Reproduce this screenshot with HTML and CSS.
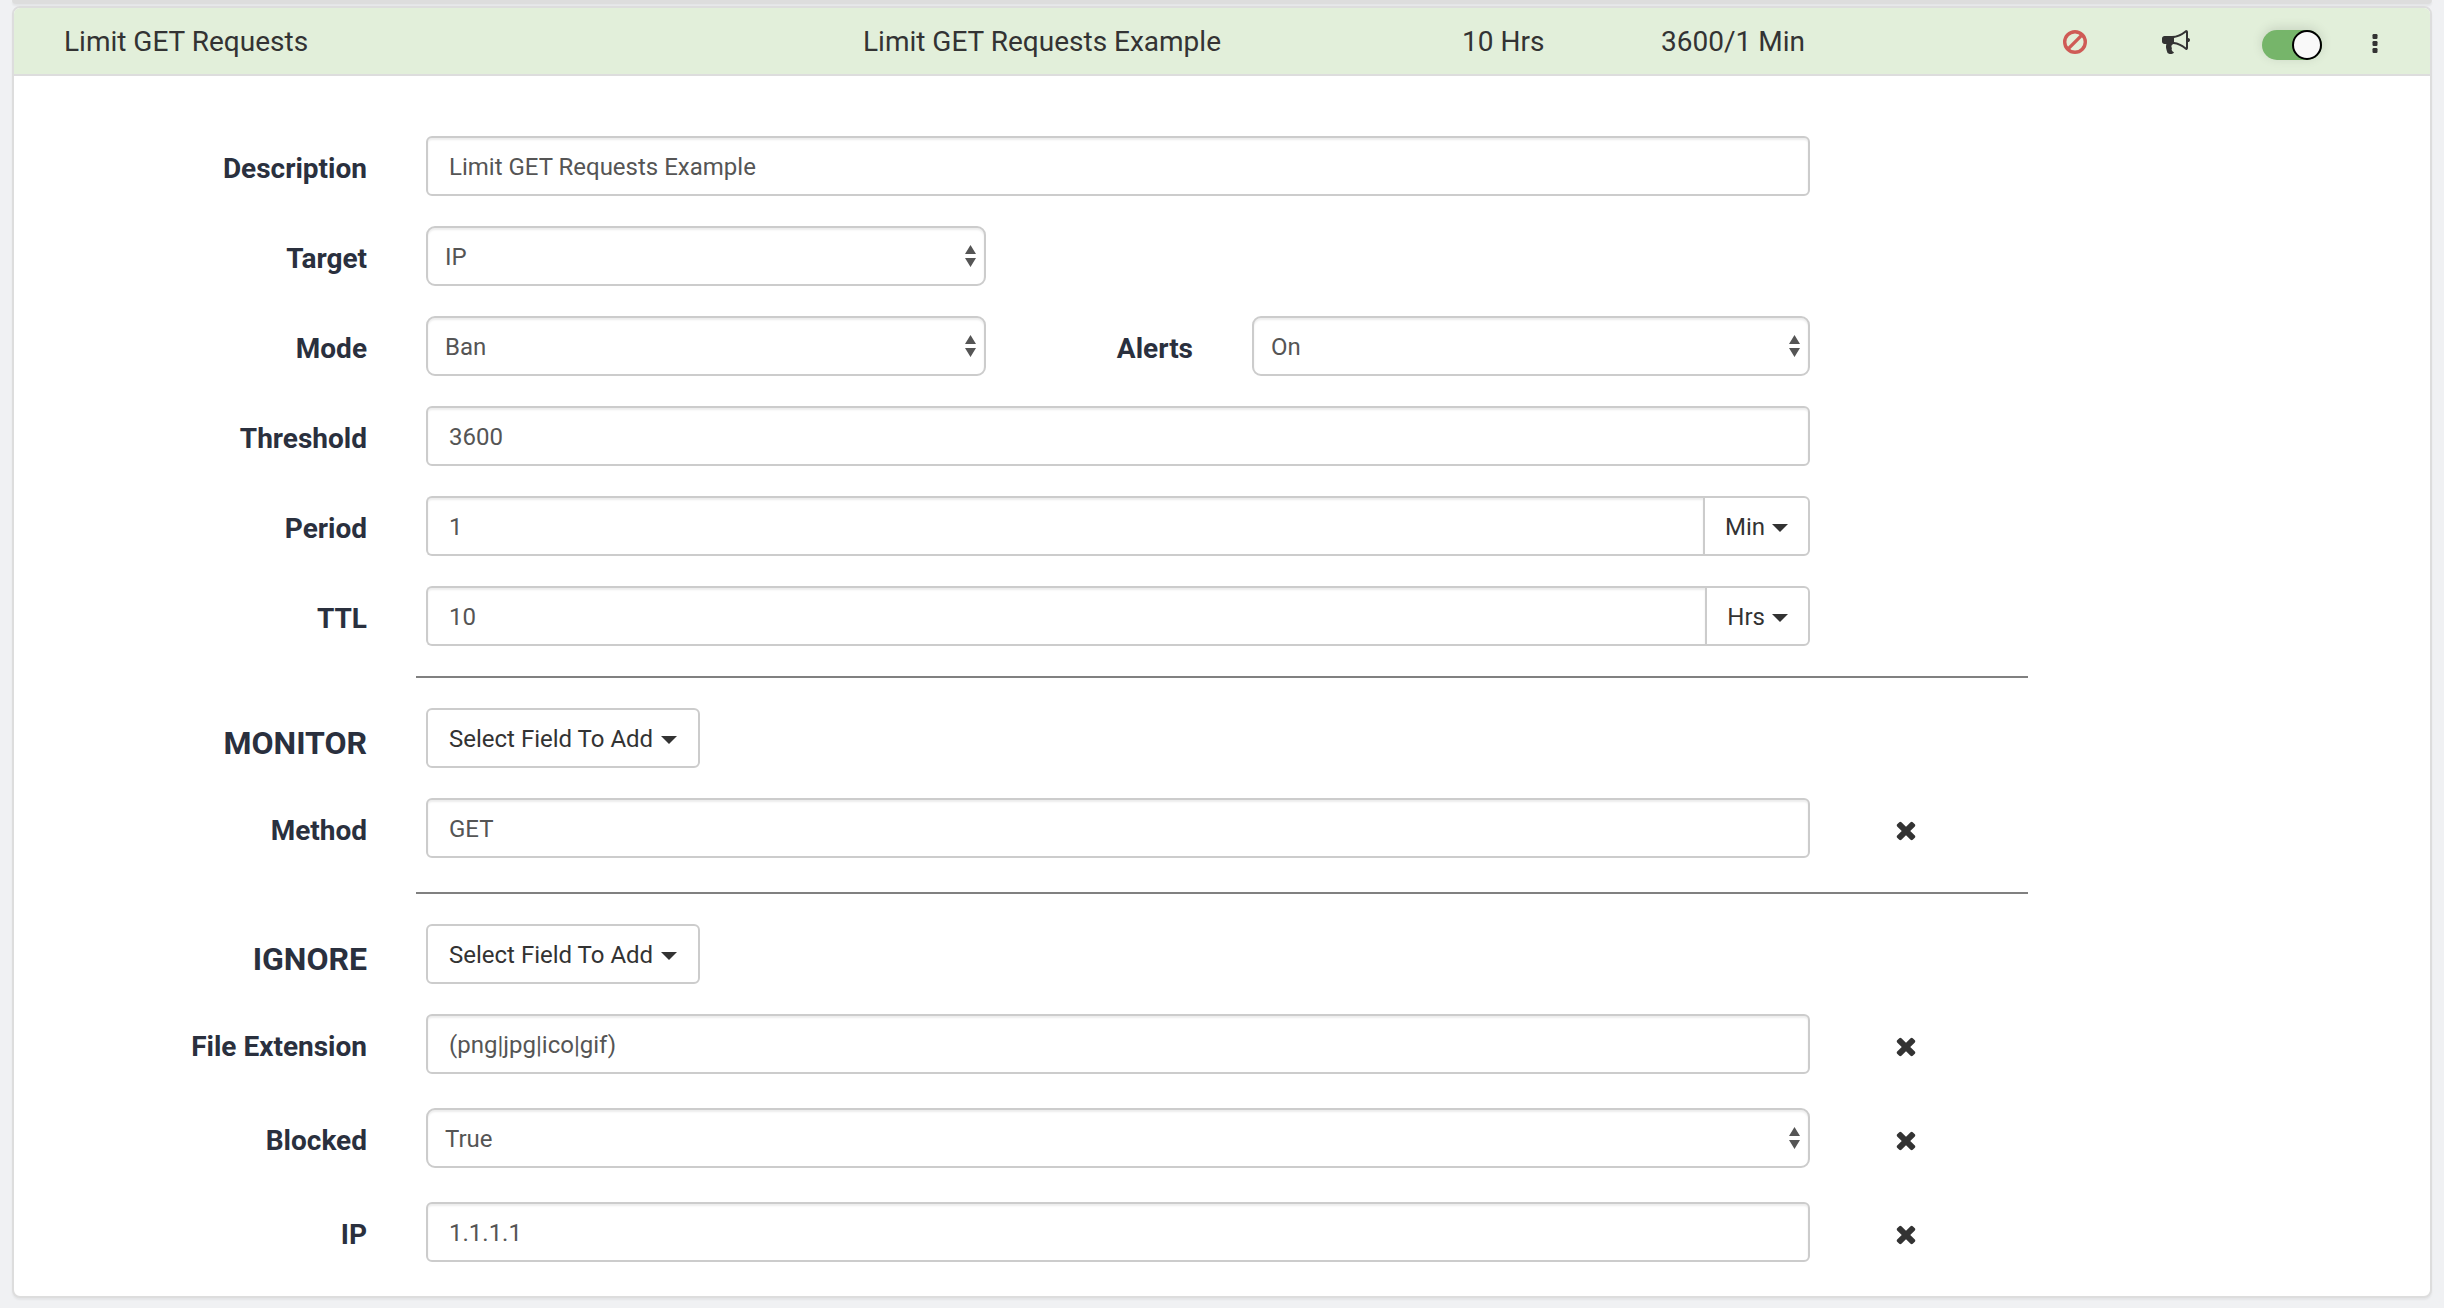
FILE: index.html
```html
<!DOCTYPE html>
<html lang="en">
<head>
<meta charset="utf-8">
<title>Limit GET Requests</title>
<link rel="stylesheet" href="styles.css">
</head>
<body>
<svg class="symbols" aria-hidden="true">
  <symbol id="times" viewBox="0 0 1792 1792"><path d="M1490 1322q0 40-28 68l-136 136q-28 28-68 28t-68-28l-294-294-294 294q-28 28-68 28t-68-28l-136-136q-28-28-28-68t28-68l294-294-294-294q-28-28-28-68t28-68l136-136q28-28 68-28t68 28l294 294 294-294q28-28 68-28t68 28l136 136q28 28 28 68t-28 68l-294 294 294 294q28 28 28 68z"/></symbol>
  <symbol id="updown" viewBox="0 0 11 22"><path d="M5.500 0L11 9H0zM0 13h11l-5.500 9z"/></symbol>
</svg>
<div class="previous-card"></div>
<main class="card">
  <header class="card-header">
    <span>Limit GET Requests</span>
    <span>Limit GET Requests Example</span>
    <span>10 Hrs</span>
    <span>3600/1 Min</span>
    <span class="cell"><svg class="ban" viewBox="0 0 24 24" role="img" aria-label="Ban"><circle cx="12" cy="12" r="10.300"/><path d="M4.900 19.100L19.100 4.900"/></svg></span>
    <span class="cell"><svg class="icon" viewBox="0 0 1792 1792" role="img" aria-label="Alerts on"><path d="M1664 640q53 0 90.500 37.500t37.500 90.500-37.500 90.500-90.500 37.500v384q0 52-38 90t-90 38q-417-347-812-380-58 19-91 66t-31 100.500 40 92.500q-20 33-23 65.500t6 58 33.500 55 48 50 61.500 50.500q-29 58-111.500 83t-168.500 11.500-132-55.500q-7-23-29.500-87.500t-32-94.500-23-89-15-101 3.500-98.500 22-110.500h-122q-66 0-113-47t-47-113v-192q0-66 47-113t113-47h480q435 0 896-384 52 0 90 38t38 90v384zm-128 604v-954q-394 302-768 343v270q377 42 768 341z"/></svg></span>
    <span class="cell"><input class="toggle" type="checkbox" role="switch" aria-label="Enabled" checked></span>
    <button class="icon-button" type="button" aria-label="More actions"><svg class="dots" viewBox="0 0 6 20"><rect x="0.500" y="0" width="5" height="5" rx="1.200"/><rect x="0.500" y="7" width="5" height="5" rx="1.200"/><rect x="0.500" y="14" width="5" height="5" rx="1.200"/></svg></button>
  </header>
  <form class="form">
    <div class="row">
      <label for="description">Description</label>
      <input class="control" id="description" type="text" value="Limit GET Requests Example">
    </div>
    <div class="row">
      <label for="target">Target</label>
      <div class="split">
        <div class="select"><select class="control" id="target"><option>IP</option></select><svg class="arrows"><use href="#updown"/></svg></div>
      </div>
    </div>
    <div class="row">
      <label for="mode">Mode</label>
      <div class="split">
        <div class="select"><select class="control" id="mode"><option>Ban</option></select><svg class="arrows"><use href="#updown"/></svg></div>
        <label for="alerts">Alerts</label>
        <div class="select"><select class="control" id="alerts"><option>On</option></select><svg class="arrows"><use href="#updown"/></svg></div>
      </div>
    </div>
    <div class="row">
      <label for="threshold">Threshold</label>
      <input class="control" id="threshold" type="text" value="3600">
    </div>
    <div class="row">
      <label for="period">Period</label>
      <div class="group">
        <input class="control" id="period" type="text" value="1">
        <button class="button" type="button">Min<span class="caret"></span></button>
      </div>
    </div>
    <div class="row">
      <label for="ttl">TTL</label>
      <div class="group">
        <input class="control" id="ttl" type="text" value="10">
        <button class="button" type="button">Hrs<span class="caret"></span></button>
      </div>
    </div>
    <hr>
    <div class="row">
      <h2>MONITOR</h2>
      <div><button class="button" type="button">Select Field To Add<span class="caret"></span></button></div>
    </div>
    <div class="row removable">
      <label for="method">Method</label>
      <input class="control" id="method" type="text" value="GET">
      <button class="icon-button" type="button" aria-label="Remove Method"><svg class="icon"><use href="#times"/></svg></button>
    </div>
    <hr>
    <div class="row">
      <h2>IGNORE</h2>
      <div><button class="button" type="button">Select Field To Add<span class="caret"></span></button></div>
    </div>
    <div class="row removable">
      <label for="extension">File Extension</label>
      <input class="control" id="extension" type="text" value="(png|jpg|ico|gif)">
      <button class="icon-button" type="button" aria-label="Remove File Extension"><svg class="icon"><use href="#times"/></svg></button>
    </div>
    <div class="row removable">
      <label for="blocked">Blocked</label>
      <div class="select"><select class="control" id="blocked"><option>True</option></select><svg class="arrows"><use href="#updown"/></svg></div>
      <button class="icon-button" type="button" aria-label="Remove Blocked"><svg class="icon"><use href="#times"/></svg></button>
    </div>
    <div class="row removable">
      <label for="ip">IP</label>
      <input class="control" id="ip" type="text" value="1.1.1.1">
      <button class="icon-button" type="button" aria-label="Remove IP"><svg class="icon"><use href="#times"/></svg></button>
    </div>
  </form>
</main>
</body>
</html>
```
FILE: styles.css
```css
* { box-sizing: border-box; }

body {
  margin: 0;
  padding: 0 12px 10px;
  background: #f0f1f3;
  color: #333;
  font: 28px/36px Roboto, "Liberation Sans", sans-serif;
}

.symbols { display: none; }

.previous-card {
  height: 4px;
  margin-bottom: 2px;
  background: #ddd;
  border-radius: 0 0 6px 6px;
  box-shadow: 0 2px 2px rgba(0, 0, 0, .05);
}

.card {
  background: #fff;
  border: 2px solid #ddd;
  border-radius: 8px;
  box-shadow: 0 2px 2px rgba(0, 0, 0, .05);
}

.card-header {
  display: grid;
  grid-template-columns: 799fr 599fr 199fr 363fr 102fr 100fr 132fr 33fr;
  align-items: center;
  height: 68px;
  padding: 2px 39px 0 50px;
  background: #e2efda;
  border-bottom: 2px solid #ddd;
  border-radius: 6px 6px 0 0;
}

.cell { display: flex; justify-content: center; }

svg { display: block; fill: currentColor; }
.icon { width: 28px; height: 28px; }
.dots { width: 6px; height: 20px; }
.ban {
  width: 24px;
  height: 24px;
  fill: none;
  stroke: #cf5b56;
  stroke-width: 3.4;
}

.icon-button {
  display: flex;
  justify-content: center;
  padding: 4px 0 0;
  border: 0;
  background: none;
  color: #333;
}

.toggle {
  appearance: none;
  display: flex;
  justify-content: flex-end;
  align-items: center;
  width: 60px;
  height: 30px;
  margin: 6px 0 0;
  border-radius: 15px;
  background: #76b56a;
  box-shadow: 0 -2px 12px rgba(0, 0, 0, .12);
}
.toggle::before {
  content: "";
  width: 26px;
  height: 26px;
  border: 2px solid #000;
  border-radius: 50%;
  background: #f9f9f9;
}

.form { padding-top: 60px; }

.row {
  display: grid;
  grid-template-columns: 412fr 1384fr 192fr 428fr;
  align-items: center;
  margin-bottom: 30px;
}
.removable { margin-bottom: 34px; }

label, h2 {
  margin: 0;
  padding: 6px 59px 0 0;
  color: #2a303e;
  font-size: 28px;
  font-weight: 700;
  text-align: right;
}
h2 { padding-top: 10px; font-size: 32px; }

.control, .button {
  display: block;
  height: 60px;
  border: 2px solid #ccc;
  border-radius: 6px;
  background: #fff;
  color: #333;
  font: 24px/32px Roboto, "Liberation Sans", sans-serif;
}
.control {
  width: 100%;
  min-width: 0;
  padding: 2px 21px 0;
  color: #555;
  box-shadow: inset 0 2px 2px rgba(0, 0, 0, .075);
}
select.control {
  appearance: none;
  padding: 2px 17px 0;
  border-radius: 9px;
}

.select { position: relative; }
.arrows {
  position: absolute;
  top: 19px;
  right: 10px;
  width: 11px;
  height: 22px;
  fill: #555;
  pointer-events: none;
}

.split { display: grid; grid-template-columns: 560fr 266fr 558fr; align-items: center; }

.button { display: flex; align-items: center; gap: 8px; padding: 2px 21px 0; }
.caret {
  margin-top: 2px;
  border: 8px solid transparent;
  border-top-color: currentColor;
  border-bottom: 0;
}

.group { display: flex; }
.group .control { border-radius: 6px 0 0 6px; border-right: 0; }
.group .button { gap: 7px; padding: 2px 20px 0; border-radius: 0 6px 6px 0; }

hr {
  height: 2px;
  margin: 0 16.64% 30px;
  border: 0;
  background: #808080;
}
```
